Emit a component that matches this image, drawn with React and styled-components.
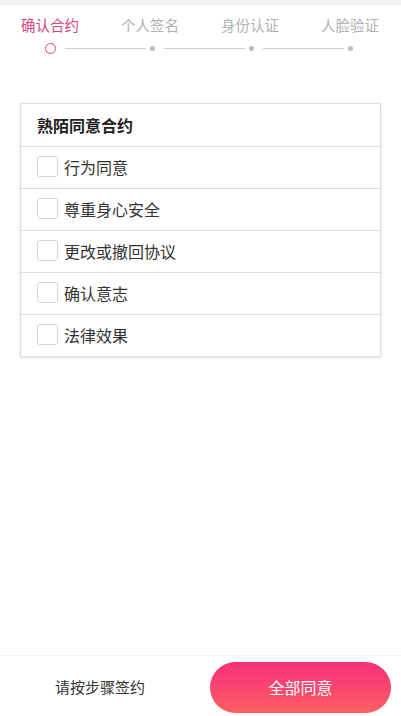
import React, { useState } from "react";
import styled, { createGlobalStyle } from "styled-components";

const GlobalStyle = createGlobalStyle`
  html, body {
    margin: 0;
    padding: 0;
    background: #fff;
    font-family: "Noto Sans CJK SC", "Noto Sans", sans-serif;
  }
  * { box-sizing: border-box; }
`;

const Page = styled.div`
  width: 401px;
  height: 716px;
  display: flex;
  flex-direction: column;
  background: #fff;
`;

const TopStrip = styled.div`
  height: 5px;
  background: #f3f3f3;
`;

const Tabs = styled.div`
  display: grid;
  grid-template-columns: repeat(4, 100px);
  padding-top: 8px;
`;

const Tab = styled.div`
  text-align: center;
  font-size: 14.5px;
  line-height: 24px;
  color: ${(p) => (p.active ? "#d8467f" : "#b2b2b2")};
`;

const Steps = styled.div`
  display: flex;
  align-items: center;
  height: 14px;
  margin-top: 4px;
  padding-left: 45px;
  padding-right: 48px;
`;

const Ring = styled.div`
  width: 11px;
  height: 11px;
  border-radius: 50%;
  border: 1.5px solid #d8467f;
`;

const Dot = styled.div`
  width: 5px;
  height: 5px;
  border-radius: 50%;
  background: #bdbdbd;
`;

const Line = styled.div`
  flex: 1;
  height: 1px;
  background: #cfcfcf;
  margin: 0 4px 0 9px;
`;

const Card = styled.div`
  margin: 48px 20px 0;
  border: 1px solid #dedede;
  box-shadow: 0 1px 3px rgba(0, 0, 0, 0.12);
  background: #fff;
`;

const Header = styled.div`
  height: 42px;
  display: flex;
  align-items: center;
  padding: 0 0 1px 16px;
  font-size: 16px;
  font-weight: 700;
  color: #222;
`;

const Row = styled.label`
  height: 42px;
  display: flex;
  align-items: center;
  padding: 0 0 2px 16px;
  border-top: 1px solid #dedede;
  font-size: 16px;
  color: #333;
  cursor: pointer;
`;

const Box = styled.span`
  width: 21px;
  height: 21px;
  border: 1px solid #d6d6d6;
  border-radius: 3px;
  margin-right: 6px;
  display: flex;
  align-items: center;
  justify-content: center;
  color: #fff;
  font-size: 13px;
  background: ${(p) => (p.checked ? "#f5407a" : "#fff")};
`;

const Spacer = styled.div`
  flex: 1;
`;

const Footer = styled.div`
  height: 61px;
  border-top: 1px solid #f0f0f0;
  display: flex;
  align-items: center;
  padding: 0 10px 0 0;
`;

const Hint = styled.div`
  flex: 1;
  text-align: center;
  font-size: 15px;
  color: #333;
  padding-right: 10px;
`;

const AgreeButton = styled.button`
  width: 181px;
  height: 51px;
  border: none;
  border-radius: 26px;
  background: linear-gradient(180deg, #f52f7b 0%, #fb5f62 100%);
  color: #fff;
  font-family: inherit;
  font-size: 16px;
  cursor: pointer;
  margin-top: 2px;
`;

const tabs = ["确认合约", "个人签名", "身份认证", "人脸验证"];
const items = ["行为同意", "尊重身心安全", "更改或撤回协议", "确认意志", "法律效果"];

export default function App() {
  const [checked, setChecked] = useState(items.map(() => false));

  const toggle = (i) => {
    setChecked(checked.map((c, j) => (j === i ? !c : c)));
  };

  return (
    <Page>
      <GlobalStyle />
      <TopStrip />
      <Tabs>
        {tabs.map((t, i) => (
          <Tab key={t} active={i === 0}>{t}</Tab>
        ))}
      </Tabs>
      <Steps>
        <Ring />
        <Line />
        <Dot />
        <Line />
        <Dot />
        <Line />
        <Dot />
      </Steps>
      <Card>
        <Header>熟陌同意合约</Header>
        {items.map((it, i) => (
          <Row key={it} onClick={() => toggle(i)}>
            <Box checked={checked[i]}>{checked[i] ? "✓" : ""}</Box>
            {it}
          </Row>
        ))}
      </Card>
      <Spacer />
      <Footer>
        <Hint>请按步骤签约</Hint>
        <AgreeButton onClick={() => setChecked(items.map(() => true))}>全部同意</AgreeButton>
      </Footer>
    </Page>
  );
}
